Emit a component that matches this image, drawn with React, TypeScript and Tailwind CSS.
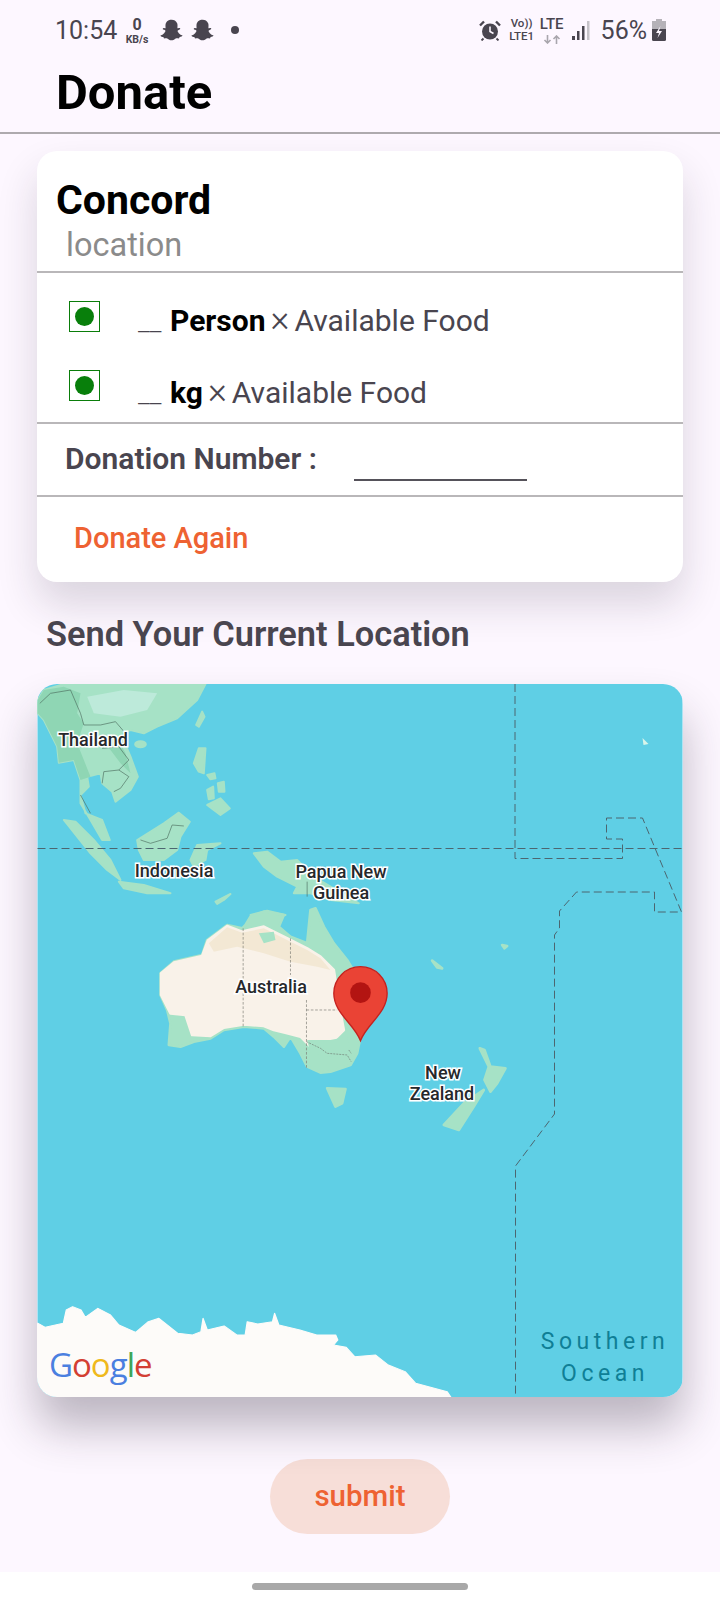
import type { ReactNode } from 'react';
import { FaSnapchatGhost } from 'react-icons/fa';

function AlarmIcon() {
    return (
        <svg width="22" height="21" viewBox="0 0 22 21" className="shrink-0">
            <circle cx="11" cy="11.5" r="8" fill="#49454f" />
            <path d="M11 6.5V11.5L14.5 13.5" stroke="#fdf7ff" strokeWidth="1.6" fill="none" />
            <path d="M1 5.5L5 1.5M21 5.5L17 1.5" stroke="#49454f" strokeWidth="2.4" />
            <path d="M4.5 18.5L2.5 20.5M17.5 18.5L19.5 20.5" stroke="#49454f" strokeWidth="1.8" />
        </svg>
    );
}

function SignalIcon() {
    return (
        <svg width="18" height="21" viewBox="0 0 18 21" className="shrink-0">
            <rect x="0" y="16" width="3" height="4" fill="#49454f" />
            <rect x="5" y="11" width="2.5" height="9" fill="#49454f" />
            <rect x="10" y="6" width="2.5" height="14" fill="#49454f" />
            <rect x="15" y="1" width="2.5" height="19" fill="#c5c2c8" />
        </svg>
    );
}

function BatteryIcon() {
    return (
        <svg width="14" height="22" viewBox="0 0 14 22" className="shrink-0">
            <rect x="4" y="0" width="6" height="2" fill="#b5b2b8" />
            <rect x="0" y="2" width="14" height="10" fill="#b5b2b8" />
            <path d="M0 10H14V20.5Q14 22 12.5 22H1.5Q0 22 0 20.5Z" fill="#49454f" />
            <path d="M8.5 7L4 14H7L5.5 19L10 12H7Z" fill="#fdf7ff" />
        </svg>
    );
}

function DataArrows() {
    return (
        <svg width="18" height="9" viewBox="0 0 18 9" className="mt-[3px]">
            <path d="M4.5 0V8M1.5 5L4.5 8L7.5 5M13.5 9V1M10.5 4L13.5 1L16.5 4" stroke="#a9a6ad" strokeWidth="1.6" fill="none" />
        </svg>
    );
}

function StatusBar() {
    return (
        <div className="h-[60px] flex items-center pl-[55px] pr-[54px] text-[#49454f]">
            <span className="text-[25px] leading-none w-[67px]">10:54</span>
            <div className="flex flex-col items-center w-[30px] mt-[1px]">
                <span className="text-[16px] leading-[18px] font-bold">0</span>
                <span className="text-[10.5px] leading-[12px] font-bold">KB/s</span>
            </div>
            <FaSnapchatGhost className="ml-[8px] w-[23px] h-[22px]" />
            <FaSnapchatGhost className="ml-[8px] w-[23px] h-[22px]" />
            <div className="ml-[17px] w-[8px] h-[8px] rounded-full bg-[#49454f]" />
            <div className="ml-auto flex items-center">
                <AlarmIcon />
                <div className="ml-[8px] flex flex-col items-center w-[26px] text-[11.5px] leading-[13.5px] font-medium">
                    <span>Vo))</span>
                    <span>LTE1</span>
                </div>
                <div className="ml-[6px] flex flex-col items-center w-[22px]">
                    <span className="text-[15px] leading-[15px] font-medium">LTE</span>
                    <DataArrows />
                </div>
                <div className="ml-[9px]"><SignalIcon /></div>
                <span className="ml-[11px] text-[25px] leading-none">56%</span>
                <div className="ml-[5px]"><BatteryIcon /></div>
            </div>
        </div>
    );
}

function FoodRow({ unit, boxClass }: { unit: string; boxClass: string }) {
    return (
        <div className="h-[72px] flex items-center pl-[32px]">
            <div className={`w-[31px] h-[31px] border border-[#0a7d0a] flex items-center justify-center ${boxClass}`}>
                <div className="w-[19px] h-[19px] rounded-full bg-[#087f0b]" />
            </div>
            <div className="ml-[38px] mt-[14px] text-[30px] leading-none text-[#49454f] flex items-baseline">
                <span className="w-[32px] text-[27px] font-light">__</span>
                <span className="font-bold text-black">{unit}</span>
                <span className="mx-[5px] text-[36px] leading-none font-light">×</span>
                <span>Available Food</span>
            </div>
        </div>
    );
}

function MapArt() {
    const land = '#a6e2c6';
    const hill = '#8fd6b4';
    const sand = '#f9f2e9';
    return (
        <svg viewBox="37 684 645 713" className="w-full h-full block">
            <rect x="37" y="684" width="645" height="713" fill="#5fcfe5" />
            <g transform="translate(30 680) scale(0.3333)" stroke={land} strokeWidth="6" strokeLinejoin="round">
                <path fill={land} d="M22 60L40 30L100 12H525L500 60L440 115L380 140L340 160L300 150L270 160L300 230L322 290L300 330L255 365L245 335L215 310L210 280L170 290L175 320L150 345L165 400L215 420L238 480L215 480L180 420L150 370L150 300L130 240L85 248L80 200L40 120L22 100Z" />
                <path fill={hill} stroke="none" d="M22 60L40 30L100 20L150 40L140 100L160 130L140 190L180 290L150 300L130 240L85 248L80 200L40 120L22 100Z" />
                <path fill="#bdeada" stroke="none" d="M170 50L280 30L380 40L350 90L270 110L190 100Z" />
                <path fill={hill} stroke="none" d="M215 180L260 170L285 220L300 280L270 250L240 210Z" />
                <path fill={land} d="M100 420L135 425L190 480L240 540L270 600L230 570L180 520Z" />
                <path fill={land} d="M265 605L340 615L420 640L350 640L280 625Z" />
                <path fill={land} d="M320 480L400 430L445 398L478 425L450 470L440 510L400 540L340 540L325 510Z" />
                <path fill={land} d="M480 540L500 495L570 490L530 510L525 540L490 560Z" />
                <path fill={land} d="M490 250L505 205L525 205L520 280L505 275Z" />
                <path fill={land} d="M530 375L570 355L598 385L570 405Z" />
                <path fill={land} d="M530 330L548 320L550 355L535 358Z" />
                <path fill={land} d="M530 285L552 280L555 295L540 298Z" />
                <path fill={land} d="M562 310L580 305L582 335L565 335Z" />
                <path fill={land} d="M497 135L515 95L522 110L505 140Z" />
                <ellipse cx="330" cy="193" rx="16" ry="9" fill={land} />
                <path fill={land} d="M670 520L710 515L750 545L800 540L850 590L900 620L985 670L900 660L840 640L790 640L800 620L740 590L700 560Z" />
                <path fill={land} d="M555 665L600 642L580 660L560 672Z" />
                <path fill={land} d="M660 705L710 692L765 705L700 720Z" />
                <path fill="none" stroke="#4f6f60" strokeWidth="2" d="M28 70L60 40L120 30L150 100L160 135L210 135L255 125L285 160M215 310L220 275L265 270L295 240L265 200L215 205M265 270L295 290L270 325L250 335M150 345L180 400M330 480L360 490L410 475L425 435L460 438" />
                <path fill="none" stroke="#4f6f60" strokeWidth="2" d="M830 605V650" />
            </g>
            <g transform="translate(130 890) scale(0.3333)">
                <g stroke={land} strokeWidth="8" strokeLinejoin="round">
                    <path fill={land} d="M90 250L130 215L215 195L230 150L290 105L335 115L345 105L360 80L400 65L460 75L445 110L480 140L530 160L540 60L555 55L580 110L610 160L650 210L680 260L690 440L680 490L660 525L600 545L570 548L530 530L510 490L480 440L460 470L430 440L400 415L340 410L280 420L240 445L190 455L150 470L115 465L120 400L110 360L90 315Z" />
                    <path fill={land} d="M590 595L645 597L635 640L615 650Z" />
                    <path fill={land} d="M940 705L1000 640L1060 600L1030 650L985 720Z" />
                    <path fill={land} d="M1048 475L1062 480L1080 530L1125 535L1100 580L1080 605L1062 570L1075 530Z" />
                    <path fill={land} d="M905 212L935 235L920 232Z" />
                    <path fill={land} d="M1115 165L1130 168L1122 175Z" />
                </g>
                <path fill={sand} stroke={sand} strokeWidth="8" strokeLinejoin="round" d="M92 250L130 218L215 198L232 152L290 108L335 125L400 110L480 150L530 175L570 200L610 240L625 340L640 420L600 460L540 470L510 440L470 430L430 420L400 408L340 403L280 413L240 438L185 435L165 375L120 370L92 315Z" />
                <path fill="#f3e8d4" d="M235 160L290 112L335 128L400 115L480 155L530 180L570 205L600 240L560 230L480 215L400 190L320 170L250 185Z" />
                <path fill={land} d="M385 130L430 125L435 150L400 160Z" />
                <path fill={land} d="M530 450L600 450L650 440L660 480L600 500L540 490Z" />
                <path fill="none" stroke="#7a7a72" strokeWidth="2" strokeDasharray="8 5" d="M338 115V410M480 145V255M528 330V535M528 360H620" />
                <path fill="none" stroke="#6f7f76" strokeWidth="2" d="M528 455L570 475L590 490L650 495L662 515M655 480L662 490" strokeDasharray="6 3" />
                <path fill="#ea4335" stroke="#c5221f" strokeWidth="4" d="M690 452C670 400 610 370 610 310A80 80 0 0 1 770 310C770 370 710 400 690 452Z" />
                <circle cx="690" cy="308" r="31" fill="#b31412" />
            </g>
            <g fill="none" stroke="#4c6670" strokeWidth="1" strokeDasharray="8 4">
                <path d="M37 848.5H682" />
                <path d="M514.5 684V858.5H622V839H606V818H642L681 912H654V892H576L559 911V928L554 935V1114L515 1166V1397" />
            </g>
            <path fill="#d8f5ea" d="M642 738L648 744L643 745Z" />
            <g transform="translate(30 1270) scale(0.4209 0.3333)">
                <path fill="#fdfbf9" stroke="#fdfbf9" strokeWidth="3" strokeLinejoin="round" d="M18 160L35 172L78 160L85 120L100 110L120 120L130 142L160 115L190 135L210 165L250 187L280 155L305 145L350 190L385 195L405 185L410 145L420 180L460 168L490 195L510 195L515 155L540 162L575 155L580 130L590 165L640 180L680 195L725 195L730 210L720 225L750 232L770 260L820 255L850 285L890 305L915 340L990 365L1000 384V400H0V160Z" />
            </g>
        </svg>
    );
}

function MapLabel({ className, children }: { className: string; children: ReactNode }) {
    return (
        <span className={`absolute -translate-x-1/2 -translate-y-1/2 whitespace-nowrap text-[18px] leading-none font-medium text-[#26282b] [paint-order:stroke_fill] [-webkit-text-stroke:3px_#ffffff] ${className}`}>
            {children}
        </span>
    );
}

function GoogleLogo() {
    return (
        <div className="absolute left-[12px] bottom-[10px] font-['Open_Sans',sans-serif] font-medium text-[33px] leading-[44px] tracking-[-1px] flex">
            <span className="text-[#4a7fe0]">G</span>
            <span className="text-[#d33f33]">o</span>
            <span className="text-[#efb91c]">o</span>
            <span className="text-[#4a7fe0]">g</span>
            <span className="text-[#3fa657]">l</span>
            <span className="text-[#d33f33]">e</span>
        </div>
    );
}

function App() {
    return (
        <div className="w-[720px] h-[1600px] overflow-hidden relative bg-[#fdf7ff] font-['Roboto',sans-serif]">
            <StatusBar />
            <div className="h-[74px] border-b-2 border-[#aeaaae] pl-[56px] text-[49px] leading-[66px] font-bold text-black">
                Donate
            </div>

            <div className="mx-[37px] mt-[17px] h-[431px] bg-white rounded-[20px] shadow-[0_22px_40px_rgba(40,30,50,0.16)] flex flex-col">
                <div className="h-[122px] border-b-2 border-[#b9b7b9] shrink-0 pl-[19px] pt-[24px]">
                    <div className="text-[41px] leading-[51px] font-bold text-black">Concord</div>
                    <div className="pl-[10px] text-[32.5px] leading-[38px] text-[#8b8b8b]">location</div>
                </div>
                <div className="h-[151px] border-b-2 border-[#b9b7b9] shrink-0 pt-[3px]">
                    <FoodRow unit="Person" boxClass="mt-[8px]" />
                    <FoodRow unit="kg" boxClass="mt-[3px]" />
                </div>
                <div className="h-[73px] border-b-2 border-[#b9b7b9] shrink-0 flex items-center pl-[28px]">
                    <span className="text-[30px] font-semibold text-[#49454f] leading-none -mt-[2px]">Donation Number :</span>
                    <div className="ml-[37px] w-[173px] h-[2px] bg-[#55525a] mt-[40px]" />
                </div>
                <div className="flex-1 flex items-center pl-[37px] pb-[2px]">
                    <span className="text-[29px] font-medium text-[#ee6232] leading-none">Donate Again</span>
                </div>
            </div>

            <div className="mt-[34px] pl-[46px] text-[34.4px] leading-[36px] font-semibold text-[#49454f]">
                Send Your Current Location
            </div>

            <div className="relative mx-[37px] mt-[32px] h-[713px] rounded-[20px] overflow-hidden shadow-[0_30px_45px_rgba(40,30,50,0.3)]">
                <MapArt />
                <MapLabel className="left-[56px] top-[56px]">Thailand</MapLabel>
                <MapLabel className="left-[137px] top-[187px]">Indonesia</MapLabel>
                <MapLabel className="left-[304px] top-[188px]">Papua New</MapLabel>
                <MapLabel className="left-[304px] top-[209px]">Guinea</MapLabel>
                <MapLabel className="left-[234px] top-[303px]">Australia</MapLabel>
                <MapLabel className="left-[406px] top-[389px]">New</MapLabel>
                <MapLabel className="left-[405px] top-[410px]">Zealand</MapLabel>
                <div className="absolute left-[568px] top-[642px] -translate-x-1/2 text-center text-[23px] leading-[32px] tracking-[4.5px] text-[#0f7f96] whitespace-nowrap">
                    Southern<br />Ocean
                </div>
                <GoogleLogo />
            </div>

            <div className="mt-[62px] flex justify-center">
                <div className="w-[180px] h-[75px] rounded-full bg-[#f7ded8] flex items-center justify-center text-[29.5px] font-medium text-[#ee6232] leading-none">
                    submit
                </div>
            </div>

            <div className="absolute left-0 right-0 bottom-0 h-[28px] bg-white flex justify-center pt-[11px]">
                <div className="w-[216px] h-[7px] rounded-full bg-[#a8a8a8]" />
            </div>
        </div>
    );
}

export default App;
